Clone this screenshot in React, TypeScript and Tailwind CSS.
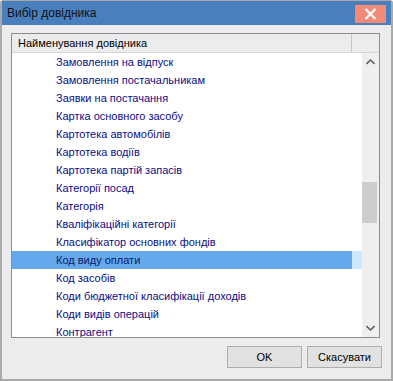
const items = [
  "Замовлення на відпуск",
  "Замовлення постачальникам",
  "Заявки на постачання",
  "Картка основного засобу",
  "Картотека автомобілів",
  "Картотека водіїв",
  "Картотека партій запасів",
  "Категорії посад",
  "Категорія",
  "Кваліфікаційні категорії",
  "Класифікатор основних фондів",
  "Код виду оплати",
  "Код засобів",
  "Коди бюджетної класифікації доходів",
  "Коди видів операцій",
  "Контрагент",
]

const selected = "Код виду оплати"

export default function App() {
  return (
    <div
      className="w-[393px] h-[381px] flex flex-col bg-[#aaaaaa] pt-px px-[2px] pb-[2px] rounded-t-[3px] text-[11px]"
      style={{ fontFamily: '"Liberation Sans", Arial, sans-serif' }}
    >
      {/* title bar */}
      <div className="h-[24px] shrink-0 flex items-start bg-[#4a7fbd]">
        <span className="ml-[5px] mt-[5px] text-[12px] text-[#111] leading-[14px]">Вибір довідника</span>
        <button className="ml-auto mr-[5px] mt-[4px] w-[31px] h-[18px] bg-[#f28a78] flex items-center justify-center">
          <svg width="13" height="12" viewBox="0 0 13 12">
            <path d="M1.5 1 L11.5 11 M11.5 1 L1.5 11" stroke="#fff" strokeWidth="2.2" />
          </svg>
        </button>
      </div>

      {/* body */}
      <div className="flex-1 flex flex-col bg-[#ececec] pt-[8px] pl-[9px] pr-[11px] pb-[11px]">
        <div className="h-[305px] flex flex-col border border-[#8a8d93] bg-white">
          <div className="h-[19px] shrink-0 flex bg-[#ececec] border-b border-[#d5d5d5]">
            <div className="w-[340px] border-r border-[#c8c8c8] pl-[6px] leading-[18px] text-black">
              Найменування довідника
            </div>
          </div>
          <div className="flex-1 flex min-h-0">
            <div className="flex-1 overflow-hidden">
              {items.map((it) => (
                <div key={it} className="h-[18px] flex">
                  <div
                    className={`w-[340px] pl-[44px] leading-[18px] whitespace-nowrap ${
                      it === selected ? "bg-[#66a8ec] text-[#0a1a6a]" : "text-[#0b0b8a]"
                    }`}
                  >
                    {it}
                  </div>
                  <div className={`flex-1 ${it === selected ? "bg-[#cce8ff]" : ""}`} />
                </div>
              ))}
            </div>
            <div className="w-[17px] bg-[#efefef] flex flex-col items-center">
              <svg width="9" height="6" viewBox="0 0 9 6" className="mt-[6px]">
                <path d="M0.5 5 L4.5 1 L8.5 5" stroke="#606060" strokeWidth="1.6" fill="none" />
              </svg>
              <div className="mt-[117px] w-[15px] h-[41px] bg-[#cdcdcd] self-start" />
              <svg width="9" height="6" viewBox="0 0 9 6" className="mt-auto mb-[6px]">
                <path d="M0.5 1 L4.5 5 L8.5 1" stroke="#606060" strokeWidth="1.6" fill="none" />
              </svg>
            </div>
          </div>
        </div>
        <div className="mt-[8px] flex justify-end gap-[5px] -mr-[2px]">
          <button className="w-[75px] h-[22px] border border-[#adadad] bg-[#e1e1e1] text-black">OK</button>
          <button className="w-[75px] h-[22px] border border-[#adadad] bg-[#e1e1e1] text-black">Скасувати</button>
        </div>
      </div>
    </div>
  )
}
